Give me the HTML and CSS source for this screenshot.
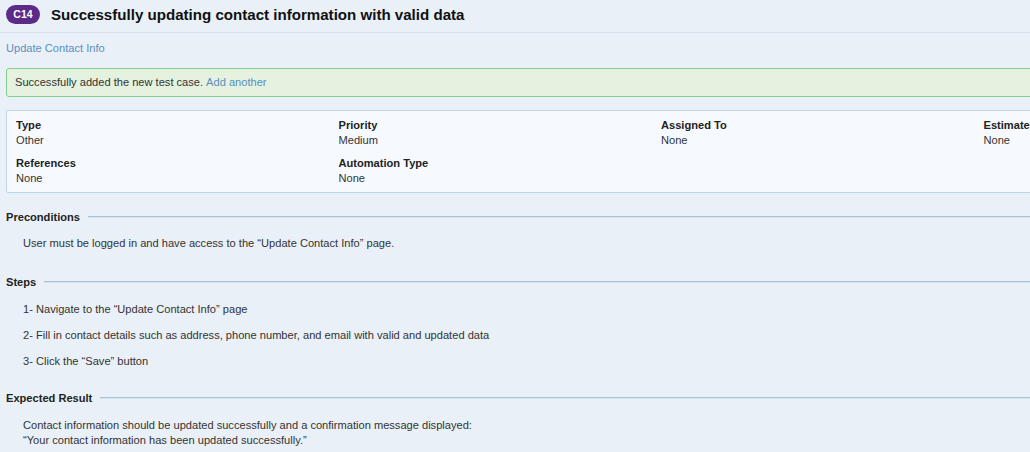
FILE: index.html
```html
<!DOCTYPE html>
<html>
<head>
<meta charset="utf-8">
<link rel="stylesheet" href="styles.css">
</head>
<body>
<div class="page">
  <div class="header">
    <span class="badge">C14</span>
    <h1 class="title">Successfully updating contact information with valid data</h1>
  </div>
  <div class="breadcrumb"><a href="#">Update Contact Info</a></div>
  <div class="alert">Successfully added the new test case. <a href="#">Add another</a></div>
  <div class="info">
    <div class="field"><div class="label">Type</div><div class="value">Other</div></div>
    <div class="field"><div class="label">Priority</div><div class="value">Medium</div></div>
    <div class="field"><div class="label">Assigned To</div><div class="value">None</div></div>
    <div class="field"><div class="label">Estimate</div><div class="value">None</div></div>
    <div class="field"><div class="label">References</div><div class="value">None</div></div>
    <div class="field"><div class="label">Automation Type</div><div class="value">None</div></div>
  </div>
  <div class="section first">
    <div class="section-head"><span class="section-title">Preconditions</span><span class="rule"></span></div>
    <div class="section-body"><p>User must be logged in and have access to the “Update Contact Info” page.</p></div>
  </div>
  <div class="section">
    <div class="section-head"><span class="section-title">Steps</span><span class="rule"></span></div>
    <div class="section-body steps">
      <p>1- Navigate to the “Update Contact Info” page</p>
      <p>2- Fill in contact details such as address, phone number, and email with valid and updated data</p>
      <p>3- Click the “Save” button</p>
    </div>
  </div>
  <div class="section last">
    <div class="section-head"><span class="section-title">Expected Result</span><span class="rule"></span></div>
    <div class="section-body result"><p>Contact information should be updated successfully and a confirmation message displayed:<br>“Your contact information has been updated successfully.”</p></div>
  </div>
</div>
</body>
</html>
```

FILE: styles.css
```css
* { box-sizing: border-box; }
html, body { margin: 0; padding: 0; }
body {
  background: #e9f0f7;
  font-family: "Liberation Sans", Arial, sans-serif;
  font-size: 11.1px;
  color: #333;
  width: 1030px;
  height: 452px;
  overflow: hidden;
}
a { color: #5a8fc2; text-decoration: none; }
.page { width: 1060px; }
.header {
  display: flex;
  align-items: center;
  height: 33px;
  padding: 0 0 4px 6px;
  border-bottom: 1px solid #d3dfea;
}
.badge {
  display: inline-flex;
  align-items: center;
  justify-content: center;
  width: 34px;
  height: 19px;
  border-radius: 10px;
  background: #5c2a87;
  color: #fff;
  font-weight: bold;
  font-size: 10.5px;
}
.title {
  margin: 0 0 0 11px;
  font-size: 15.1px;
  font-weight: bold;
  color: #111;
}
.breadcrumb {
  padding: 8px 6px 0;
  height: 35px;
  line-height: 14px;
}
.alert {
  margin: 0 0 0 6px;
  height: 29px;
  padding: 0 8px 2px;
  display: flex;
  align-items: center;
  border: 1px solid #80d08f;
  border-radius: 3px;
  background: #e4f2df;
  color: #333;
}
.alert a { margin-left: 3px; }
.info {
  margin: 13px 0 0 6px;
  height: 83px;
  border: 1px solid #bdd6ea;
  border-radius: 2px;
  background: #f6fafe;
  padding: 7px 9px 0;
  display: grid;
  grid-template-columns: repeat(4, 322.5px);
  row-gap: 8px;
  align-content: start;
}
.label { font-weight: bold; color: #222; line-height: 15px; }
.value { line-height: 15px; color: #333; }
.section { padding: 0 0 0 6px; margin-top: 25px; }
.section.first { margin-top: 17px; }
.section.last { margin-top: 23px; }
.section-head {
  display: flex;
  align-items: center;
  height: 14px;
}
.section-title { font-weight: bold; color: #222; }
.rule {
  flex: 1;
  margin-left: 8px;
  height: 2px;
  border-top: 1px solid #a7c3da;
  border-bottom: 1px solid #d4e3ef;
}
.section-body { padding: 12px 0 0 17px; }
.section-body p { margin: 0; line-height: 14px; }
.section-body.steps { padding-top: 13px; }
.steps p { margin-bottom: 12px; }
.steps p:last-child { margin-bottom: 0; }
.section-body.result { padding-top: 13px; }
.result p { line-height: 15px; }
```
